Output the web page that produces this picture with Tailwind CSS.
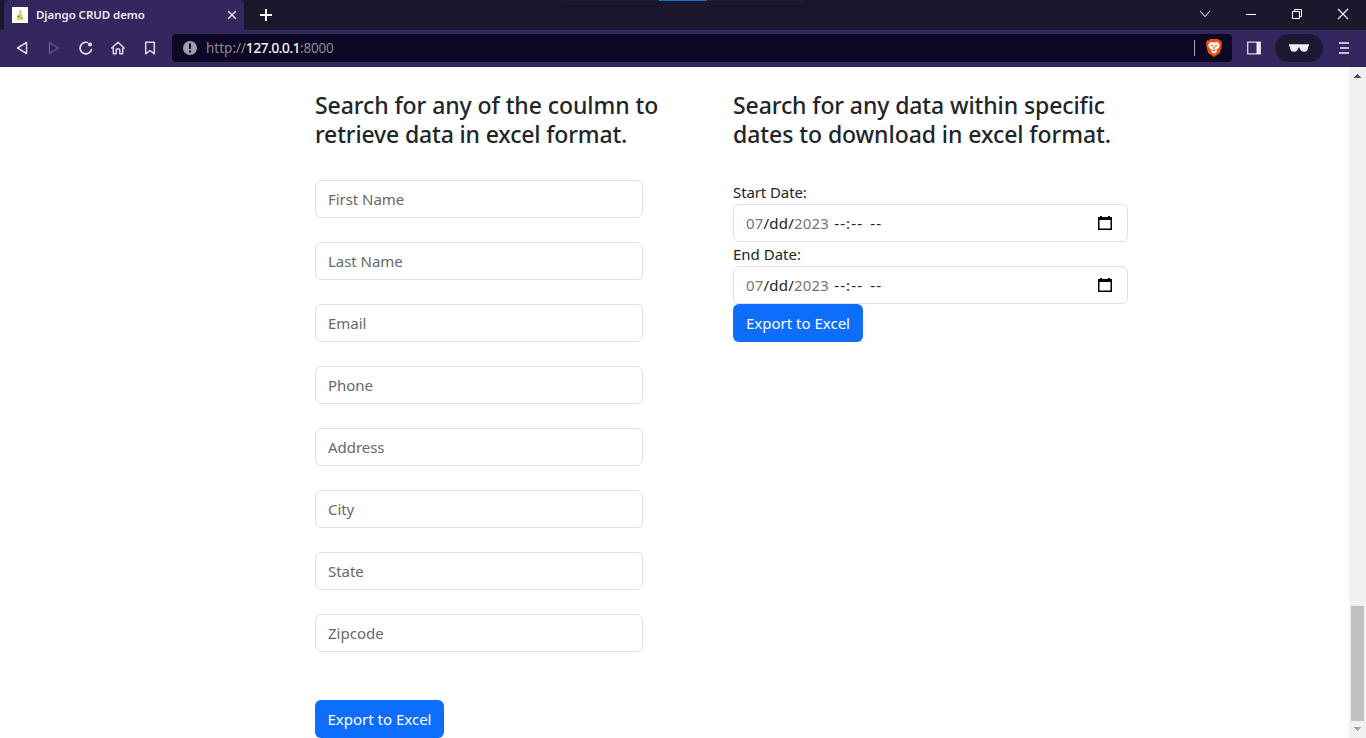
<!DOCTYPE html>
<html lang="en">
<head>
<meta charset="utf-8">
<title>Django CRUD demo</title>
<script src="https://cdn.jsdelivr.net/npm/@tailwindcss/browser@4"></script>
</head>
<body class="flex h-[738px] w-[1366px] flex-col overflow-hidden bg-white font-['Noto_Sans','Open_Sans',sans-serif] text-[#212529]">

<!-- Tab strip -->
<header class="relative flex h-[30px] shrink-0 items-stretch bg-[#1a172c] text-white">
  <div class="absolute left-[563px] top-0 h-px w-[241px] bg-[#1f2223]"></div>
  <div class="absolute left-[659px] top-0 h-px w-12 bg-[#0078d4]"></div>
  <div class="ml-1 flex w-[240px] items-center rounded-t bg-[#34265f] pl-2 pr-[6px]">
    <svg class="h-4 w-4 shrink-0" viewBox="0 0 16 16"><path fill="#fff" d="M0 0h16v16H0z"/><path fill="#b5b9b9" d="M7 3.500h2.500v2H7z"/><path fill="#efce58" d="M6.500 6h3.500l.5 2v3H6z"/><path fill="#5aa79a" d="M5 8.500h3v2H5z"/><path fill="#f3cf38" d="M5 10.500h6v2.500H5z"/><path fill="#8c979e" d="M8.500 10h2v1h-2z"/></svg>
    <span class="ml-2 text-[11.5px] font-semibold leading-4 tracking-[-0.06px] whitespace-nowrap text-[#eeecf4]">Django CRUD demo</span>
    <svg class="ml-auto h-3 w-3" viewBox="0 0 12 12" fill="none" stroke="#f1eff6" stroke-width="1.400"><path d="M2 2l8 8M10 2l-8 8"/></svg>
  </div>
  <svg class="ml-4 mt-[9px] h-3 w-3" viewBox="0 0 12 12" fill="#fff"><path d="M5 0h2v12H5zM0 5h12v2H0z"/></svg>
  <div class="ml-auto flex items-center pb-[2px]">
    <svg class="mr-[34px] h-3 w-3" viewBox="0 0 12 12" fill="none" stroke="#d4d3d8" stroke-width="1.100"><path d="M1 3l5 5.500L11 3"/></svg>
    <svg class="mr-[34px] h-3 w-3" viewBox="0 0 12 12" fill="#fff"><path d="M1 6h10v1H1z"/></svg>
    <svg class="mr-[34px] h-3 w-3" viewBox="0 0 12 12" fill="none" stroke="#fff"><path d="M1.500 3.500h7v7h-7zM3.500 3.500v-2h7v7h-2"/></svg>
    <svg class="mr-[17px] h-3 w-3" viewBox="0 0 12 12" fill="none" stroke="#fff" stroke-width="1.100"><path d="M1 1l10 10M11 1L1 11"/></svg>
  </div>
</header>

<!-- Address toolbar -->
<nav class="flex h-[37px] shrink-0 items-center border-b border-[#2b1f53] bg-[#34265f]">
  <div class="ml-[14px] flex w-[158px] gap-4">
    <svg class="h-4 w-4" viewBox="0 0 16 16" fill="none" stroke="#dcd9e5" stroke-width="1.500" stroke-linejoin="round"><path d="M12.500 2.500v11L3.500 8z"/></svg>
    <svg class="h-4 w-4" viewBox="0 0 16 16" fill="none" stroke="#665889" stroke-width="1.400" stroke-linejoin="round"><path d="M3.500 2.500v11L12.500 8z"/></svg>
    <svg class="h-4 w-4" viewBox="0 0 16 16" fill="none" stroke="#e6e3ed" stroke-width="1.700" stroke-linecap="round"><path d="M13.500 9.500A5.800 5.800 0 1 1 9.500 2.500"/><circle cx="12" cy="4.500" r="2" fill="#e6e3ed" stroke="none"/></svg>
    <svg class="h-4 w-4" viewBox="0 0 16 16" fill="none" stroke="#dcd9e5" stroke-width="1.500" stroke-linejoin="round" stroke-linecap="round"><path d="M1.800 8L8 2.300 14.200 8M3.300 7.500v6.200H6.200V10.500a1.800 1.800 0 0 1 3.600 0v3.200h2.900V7.500"/></svg>
    <svg class="h-4 w-4" viewBox="0 0 16 16" fill="none" stroke="#dcd9e5" stroke-width="1.500" stroke-linejoin="round"><path d="M3.700 2.300h8.600v11.500L8 10.500l-4.300 3.300z"/></svg>
  </div>
  <div class="flex h-7 w-[1060px] items-center rounded bg-[#0d0624]">
    <svg class="ml-[11px] h-[14px] w-[14px]" viewBox="0 0 14 14"><circle cx="7" cy="7" r="7" fill="#9d9fa8"/><path fill="#0d0624" d="M6 2.500h2v5.500H6zM6 9.500h2v2H6z"/></svg>
    <span class="ml-[9px] text-[13.500px] leading-5 whitespace-nowrap text-[#8c8a97]"><span>http://</span><span class="tracking-[-0.35px] text-white [-webkit-text-stroke:0.2px_#fff]">127.0.0.1</span><span class="tracking-[-0.25px]">:8000</span></span>
    <div class="ml-auto h-4 w-px bg-[#a7a5b1]"></div>
    <svg class="ml-[11px] mr-[10px] h-[18px] w-4" viewBox="0 0 16 18"><path fill="#fb4e0e" d="M4 0h8l1.500 1.500L15 1.400l1 2.600-.6 1.500.3 1.500-1.900 7L8 18l-5.800-4L.3 7l.3-1.500L0 4l1-2.600 1.500.1z"/><path fill="#fff" d="M4.500 3L8 3.500 11.500 3 13.700 5.500l-.7 3-2.500 2.500.4 1.700L8 15l-2.900-2.300.4-1.700L3 8.500l-.7-3z"/><path fill="#fb4e0e" d="M4.200 6l3 .6-.8 1.400zM11.800 6l-3 .6.800 1.400zM7.500 7.500h1l.3 2L8 10.300l-.8-.8zM6 11.500l2-1 2 1-2 .7z"/></svg>
  </div>
  <svg class="ml-[15px] h-[14px] w-[14px]" viewBox="0 0 14 14"><path fill="none" stroke="#d8d5e1" stroke-width="1.300" d="M.7 1.200h12.600v11.600H.7z"/><path fill="#eeecf4" d="M9.500 1H13v12H9.500z"/></svg>
  <div class="ml-[14px] flex h-7 w-12 items-center justify-center rounded-full bg-[#1e1933]">
    <svg class="h-2 w-5" viewBox="0 0 20 8" fill="#efedf2"><path d="M0 .3h20v1.700l-.8.500C19 6 18 7.700 15.200 7.700c-2.900 0-4.300-1.500-4.700-4.200h-1C9.100 6.200 7.700 7.700 4.800 7.700 2 7.700 1 6 .8 2.500L0 2z"/></svg>
  </div>
  <svg class="ml-4 h-3 w-[10px]" viewBox="0 0 10 12" fill="#c5c0d2"><path d="M0 0h10v2H0zM1 5h9v2H1zM0 10h10v2H0z"/></svg>
</nav>

<!-- Page viewport -->
<div class="flex min-h-0 flex-1">
  <main class="flex min-w-0 flex-1 items-start overflow-hidden pl-[315px] pt-6 text-[15px]">
    <section class="w-[418px] shrink-0">
      <h4 class="h-[89px] text-[23px] font-medium leading-[28.8px] whitespace-nowrap"><span class="tracking-[-0.07px]">Search for any of the coulmn to</span><br><span class="tracking-[-0.15px]">retrieve data in excel format.</span></h4>
      <form class="flex w-[328px] flex-col gap-6">
        <input class="h-[38px] rounded-md border border-[#dee2e6] px-3 tracking-[-0.05px] placeholder:text-[#66696c]" placeholder="First Name">
        <input class="h-[38px] rounded-md border border-[#dee2e6] px-3 tracking-[-0.05px] placeholder:text-[#66696c]" placeholder="Last Name">
        <input class="h-[38px] rounded-md border border-[#dee2e6] px-3 tracking-[-0.05px] placeholder:text-[#66696c]" placeholder="Email">
        <input class="h-[38px] rounded-md border border-[#dee2e6] px-3 tracking-[-0.05px] placeholder:text-[#66696c]" placeholder="Phone">
        <input class="h-[38px] rounded-md border border-[#dee2e6] px-3 tracking-[-0.05px] placeholder:text-[#66696c]" placeholder="Address">
        <input class="h-[38px] rounded-md border border-[#dee2e6] px-3 tracking-[-0.05px] placeholder:text-[#66696c]" placeholder="City">
        <input class="h-[38px] rounded-md border border-[#dee2e6] px-3 tracking-[-0.05px] placeholder:text-[#66696c]" placeholder="State">
        <input class="h-[38px] rounded-md border border-[#dee2e6] px-3 placeholder:text-[#66696c]" placeholder="Zipcode">
        <button type="button" class="mt-6 h-[38px] w-[129px] rounded-md bg-[#0d6efd] whitespace-nowrap text-white">Export to Excel</button>
      </form>
    </section>
    <section class="w-[395px] shrink-0">
      <h4 class="h-[89px] text-[23px] font-medium leading-[28.8px] whitespace-nowrap"><span class="tracking-[-0.1px]">Search for any data within specific</span><br><span class="tracking-[-0.06px]">dates to download in excel format.</span></h4>
      <form>
        <label class="block h-6 leading-6 tracking-[-0.1px]">Start Date:</label>
        <div class="flex h-[38px] items-center rounded-md border border-[#dee2e6] px-3">
          <span class="whitespace-pre tracking-[0.2px]"><span class="text-[#757575]">07</span>/dd/<span class="text-[#757575]">2023</span><span class="tracking-[1.15px]"> --:--</span><span class="ml-[7px] tracking-[1.15px]">--</span></span>
          <svg class="ml-auto mr-[3px] h-[14px] w-[14px]" viewBox="0 0 14 14"><path d="M2 0h2v1h6V0h2v1h2v13H0V1h2zM1.500 4v8.500h11V4z" fill-rule="evenodd"/></svg>
        </div>
        <label class="block h-6 leading-6">End Date:</label>
        <div class="flex h-[38px] items-center rounded-md border border-[#dee2e6] px-3">
          <span class="whitespace-pre tracking-[0.2px]"><span class="text-[#757575]">07</span>/dd/<span class="text-[#757575]">2023</span><span class="tracking-[1.15px]"> --:--</span><span class="ml-[7px] tracking-[1.15px]">--</span></span>
          <svg class="ml-auto mr-[3px] h-[14px] w-[14px]" viewBox="0 0 14 14"><path d="M2 0h2v1h6V0h2v1h2v13H0V1h2zM1.500 4v8.500h11V4z" fill-rule="evenodd"/></svg>
        </div>
        <button type="button" class="block h-[38px] w-[130px] rounded-md bg-[#0d6efd] whitespace-nowrap text-white">Export to Excel</button>
      </form>
    </section>
  </main>
  <!-- Scrollbar -->
  <div class="flex w-[17px] shrink-0 flex-col items-center bg-[#f1f1f1]">
    <svg class="mt-[7px] h-1 w-[7px] shrink-0" viewBox="0 0 7 4" fill="#505050"><path d="M3 0h1v1h1v1h1v1h1v1H0V3h1V2h1V1h1z"/></svg>
    <div class="mt-auto h-[115px] w-[13px] bg-[#c1c1c1]"></div>
    <svg class="mb-[7px] mt-[6px] h-1 w-[7px] shrink-0" viewBox="0 0 7 4" fill="#a3a3a3"><path d="M0 0h7v1H6v1H5v1H4v1H3V3H2V2H1V1H0z"/></svg>
  </div>
</div>
</body>
</html>
